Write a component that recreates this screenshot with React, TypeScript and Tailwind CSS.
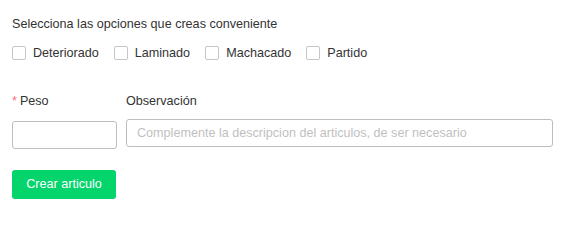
import React from "react";

const opciones = ["Deteriorado", "Laminado", "Machacado", "Partido"];

export default function App() {
  return (
    <div className="min-h-screen bg-white text-[12.6px] text-[#333] font-['Liberation_Sans',Arial,sans-serif] pl-3 pr-[10px] pt-[16px]">
      <p className="leading-[16px]">Selecciona las opciones que creas conveniente</p>

      <div className="mt-[13px] flex items-center">
        {opciones.map((op) => (
          <label key={op} className="flex items-center mr-[15px] h-[16px]">
            <input
              type="checkbox"
              className="appearance-none w-[14px] h-[14px] border border-[#c6c6c6] rounded-[2px] bg-white m-0"
            />
            <span className="ml-[7px] leading-[16px]">{op}</span>
          </label>
        ))}
      </div>

      <div className="mt-[32px] flex gap-[9px]">
        <div className="w-[105px] flex flex-col">
          <label className="leading-[16px] h-[16px]">
            <span className="text-[#f5727a] mr-[3px]">*</span>Peso
          </label>
          <input
            type="text"
            className="mt-[12px] h-[28px] w-full border border-[#bdbdbd] rounded-[3px] px-2 outline-none"
          />
        </div>
        <div className="flex-1 min-w-0 flex flex-col">
          <label className="leading-[16px] h-[16px]">Observación</label>
          <input
            type="text"
            placeholder="Complemente la descripcion del articulos, de ser necesario"
            className="mt-[10px] h-[28px] w-full border border-[#bdbdbd] rounded-[3px] px-[10px] outline-none placeholder:text-[#bfbfbf] text-[12.6px]"
          />
        </div>
      </div>

      <button className="mt-[21px] h-[29px] w-[104px] rounded-[3px] bg-[#04d46c] text-white text-[12.6px]">
        Crear articulo
      </button>
    </div>
  );
}
